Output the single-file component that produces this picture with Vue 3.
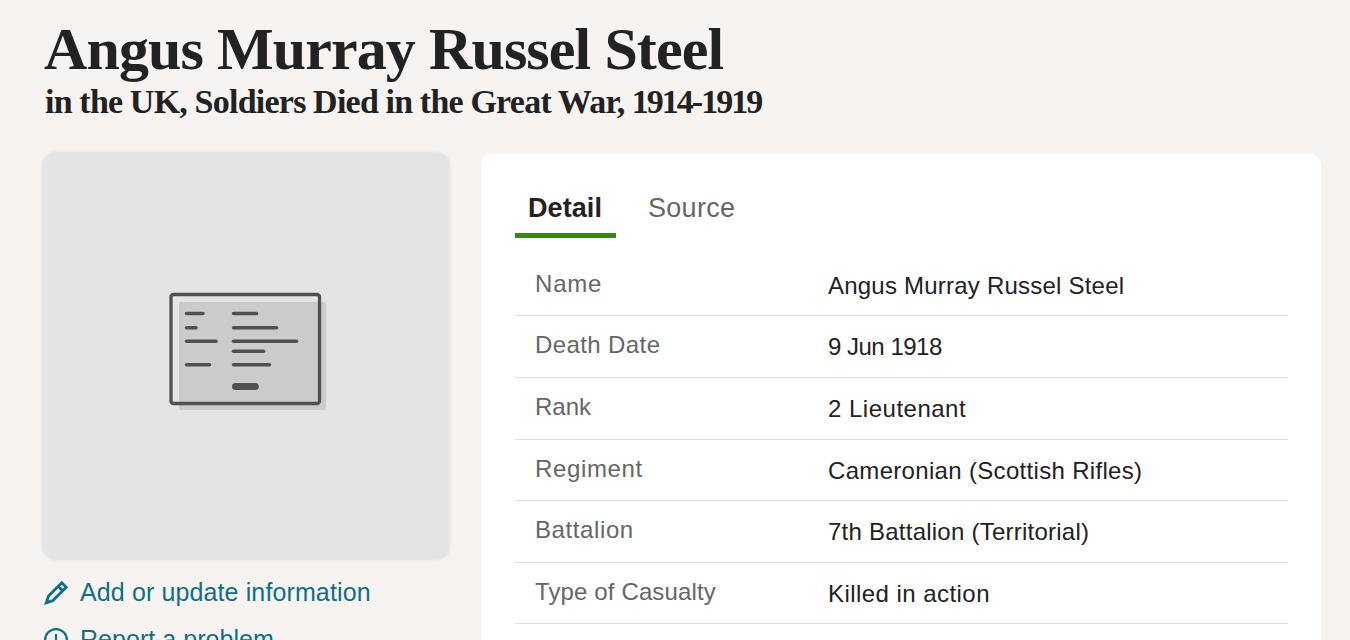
<template>
  <div class="page">
    <header class="heading">
      <h1 class="title">{{ person }}</h1>
      <h2 class="collection">in the UK, Soldiers Died in the Great War, <span class="years">1914-1919</span></h2>
    </header>

    <div class="columns">
      <aside class="side">
        <div class="thumb">
          <svg class="record" viewBox="0 0 160 120" width="160" height="120">
            <rect x="14" y="7" width="147" height="108" rx="2" fill="#cbcbcb" />
            <rect x="6" y="-0.500" width="148.500" height="109" rx="2.500" fill="none" stroke="#505050" stroke-width="3.300" />
            <g stroke="#505050" stroke-width="3.500" stroke-linecap="round">
              <path
                v-for="(line, i) in recordLines"
                :key="i"
                :d="`M${line[0]} ${line[1]}H${line[2]}`"
              />
              <path d="M70.500 91.500H90.300" stroke-width="7" />
            </g>
          </svg>
        </div>

        <a class="action">
          <svg class="icon" viewBox="0 0 24 24" width="24" height="24">
            <path d="M2.300 21.700 4.500 15 17.800 1.800l4.400 4.400L9 19.500zM14.300 5.300l4.400 4.400" fill="none" stroke="currentColor" stroke-width="2.800" />
          </svg>
          <span class="add">Add or update information</span>
        </a>
        <a class="action">
          <svg class="icon" viewBox="0 0 24 24" width="24" height="24">
            <circle cx="12" cy="12" r="10.900" fill="none" stroke="currentColor" stroke-width="2.200" />
            <path d="M12 6v8M12 16v2.500" stroke="currentColor" stroke-width="2.200" />
          </svg>
          <span class="report">Report a problem</span>
        </a>
      </aside>

      <main class="panel">
        <nav class="tabs">
          <button
            v-for="tab in tabs"
            :key="tab"
            class="tab"
            :class="{ active: tab === current }"
            @click="current = tab"
          >{{ tab }}</button>
        </nav>
        <dl class="details">
          <div v-for="row in rows" :key="row.label" class="row">
            <dt :style="{ letterSpacing: row.tracking[0] + 'px' }">{{ row.label }}</dt>
            <dd :style="{ letterSpacing: row.tracking[1] + 'px' }">{{ row.value }}</dd>
          </div>
        </dl>
      </main>
    </div>
  </div>
</template>

<script setup>
import { ref } from 'vue'

const person = 'Angus Murray Russel Steel'
const tabs = ['Detail', 'Source']
const current = ref('Detail')

// tracking: letter spacing of label and value
const rows = [
  { label: 'Name', value: person, tracking: [0.8, 0.22] },
  { label: 'Death Date', value: '9 Jun 1918', tracking: [0.4, -0.5] },
  { label: 'Rank', value: '2 Lieutenant', tracking: [0, 0.5] },
  { label: 'Regiment', value: 'Cameronian (Scottish Rifles)', tracking: [0.65, 0.32] },
  { label: 'Battalion', value: '7th Battalion (Territorial)', tracking: [0.6, 0.24] },
  { label: 'Type of Casualty', value: 'Killed in action', tracking: [0.13, 0.45] },
]

// [start, y, end] of each line on the record icon
const recordLines = [
  [21.5, 18.5, 38],
  [21.5, 32.8, 31],
  [21.5, 46.3, 51],
  [21.5, 69.8, 44.5],
  [68.5, 18.5, 91.5],
  [68.5, 32.8, 111.5],
  [68.5, 46.3, 131.5],
  [68.5, 56.3, 98.5],
  [68.5, 69.8, 104.5],
]
</script>

<style>
body {
  background: #f6f3f0;
}
</style>

<style scoped>
.page {
  height: 640px;
  overflow: hidden;
  box-sizing: border-box;
  padding: 14px 29px 0 43px;
  background: #f6f3f0;
  color: #222;
  font-family: "Liberation Sans", Arial, sans-serif;
}
.heading {
  height: 139px;
  padding-left: 1px;
  font-family: "Liberation Serif", "Times New Roman", serif;
}
.title,
.collection {
  margin: 0;
  font-weight: bold;
  white-space: nowrap;
}
.title {
  font-size: 60px;
  line-height: 70px;
  letter-spacing: -0.9px;
}
.collection {
  padding-left: 1px;
  font-size: 34px;
  line-height: 35px;
  letter-spacing: -0.75px;
  word-spacing: -0.3px;
}
.years {
  letter-spacing: -2px;
}
.columns {
  display: flex;
  gap: 32px;
}
.side {
  width: 406px;
}
.thumb {
  display: flex;
  align-items: center;
  justify-content: center;
  height: 406px;
  margin-bottom: 10px;
  border-radius: 14px;
  background: #e4e4e4;
  box-shadow: 0 0 4px rgba(0, 0, 0, 0.14);
}
.record {
  overflow: visible;
  margin: -3px 2px 0 0;
}
.action {
  display: flex;
  align-items: center;
  height: 47px;
  padding-left: 1px;
  color: #106e8a;
  font-size: 25px;
}
.icon {
  margin-right: 12px;
  overflow: visible;
}
.add {
  letter-spacing: 0.12px;
}
.report {
  letter-spacing: 0.05px;
}
.panel {
  flex: 1;
  height: 520px;
  margin-top: 1px;
  padding: 23px 33px 0 34px;
  border-radius: 10px;
  background: #fff;
}
.tabs {
  display: flex;
  gap: 19px;
}
.tab {
  box-sizing: border-box;
  height: 61px;
  padding: 6px 13px 0;
  border: 0;
  border-bottom: 5px solid transparent;
  background: none;
  color: #666;
  font: 27px "Liberation Sans", Arial, sans-serif;
  letter-spacing: 0.3px;
}
.tab.active {
  width: 101px;
  padding-left: 12px;
  border-color: #368a07;
  color: #222;
  font-weight: bold;
  letter-spacing: 0.1px;
}
.details {
  margin: 16.8px 0 0;
}
.row {
  box-sizing: border-box;
  display: grid;
  grid-template-columns: 293px 1fr;
  align-items: center;
  height: 61.6px;
  padding: 1.4px 0 0 20px;
  border-bottom: 1px solid #dedede;
  font-size: 24px;
  white-space: nowrap;
}
dt {
  padding-bottom: 4px;
  color: #666;
}
dd {
  margin: 0;
}
</style>
